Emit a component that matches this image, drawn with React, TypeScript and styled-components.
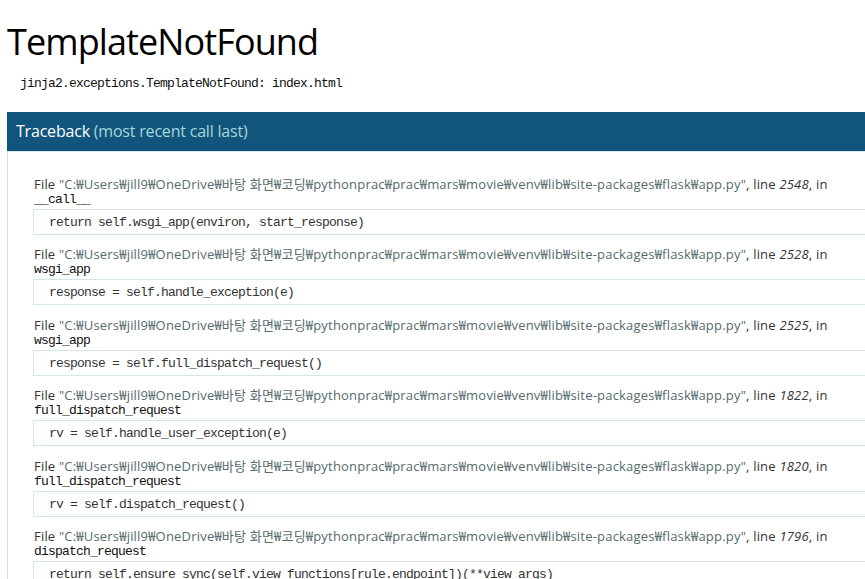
import React from "react";
import styled, { createGlobalStyle } from "styled-components";

const Global = createGlobalStyle`
  html, body { margin: 0; padding: 0; background: #fff; overflow: hidden; }
  body { font-family: "Open Sans", "Noto Sans CJK KR", sans-serif; color: #000; }
`;

const Debugger = styled.div`
  width: 890px;
  padding: 0 0 0 7px;
  text-align: left;
`;

const Title = styled.h1`
  font-family: "Open Sans", "Noto Sans CJK KR", sans-serif;
  font-weight: normal;
  font-size: 36px;
  line-height: 44px;
  margin: 0;
  padding-top: 20px;
  letter-spacing: -0.9px;
`;

const ErrorMsg = styled.p`
  margin: 12px 0 0 13px;
  font-family: "Liberation Mono", "Noto Sans CJK KR", monospace;
  font-size: 13px;
  letter-spacing: -0.8px;
  line-height: 16px;
  color: #111;
  white-space: pre-wrap;
`;

const TracebackHeader = styled.h2`
  margin: 20px 0 0 0;
  padding: 9px;
  height: 21px;
  font-size: 16px;
  line-height: 21px;
  font-weight: normal;
  letter-spacing: -0.2px;
  background-color: #11557c;
  color: #fff;

  em {
    font-style: normal;
    color: #a5d6d9;
  }
`;

const Traceback = styled.div`
  border: 1px solid #ddd;
  border-top-color: #d6e6ea;
  padding: 24px 10px 10px 10px;
`;

const FrameList = styled.ul`
  list-style: none;
  margin: 0;
  padding: 0 0 0 15px;
  display: flex;
  flex-direction: column;
  gap: 11.4px;
`;

const Frame = styled.li`
  margin: 0;
`;

const FrameHeading = styled.h4`
  font-size: 13px;
  font-weight: normal;
  margin: 0 0 1px 0;
  line-height: 16px;
  color: #333;
`;

const FileLine = styled.span`
  display: block;
  white-space: nowrap;
  letter-spacing: 0.2px;
  padding-left: 1px;
`;

const Filename = styled.cite`
  font-style: normal;
  color: #556b6e;
`;

const LineNo = styled.em`
  font-style: italic;
`;

const FunctionName = styled.code`
  display: block;
  font-family: "Liberation Mono", "Noto Sans CJK KR", monospace;
  font-size: 13px;
  letter-spacing: -0.8px;
  line-height: 16px;
  padding-left: 1px;
  color: #111;
`;

const SourceLine = styled.pre`
  margin: 0;
  padding: 5px 0 3px 15px;
  height: 16px;
  line-height: 16px;
  background: #fff;
  color: #333;
  border: 1px solid #d3e7e9;
  font-family: "Liberation Mono", "Noto Sans CJK KR", monospace;
  font-size: 13px;
  letter-spacing: -0.8px;
  white-space: pre;
  overflow: hidden;
`;

const PATH =
  '"C:₩Users₩jill9₩OneDrive₩바탕 화면₩코딩₩pythonprac₩prac₩mars₩movie₩venv₩lib₩site-packages₩flask₩app.py"';

const frames = [
  { line: 2548, fn: "__call__", src: "return self.wsgi_app(environ, start_response)" },
  { line: 2528, fn: "wsgi_app", src: "response = self.handle_exception(e)" },
  { line: 2525, fn: "wsgi_app", src: "response = self.full_dispatch_request()" },
  { line: 1822, fn: "full_dispatch_request", src: "rv = self.handle_user_exception(e)" },
  { line: 1820, fn: "full_dispatch_request", src: "rv = self.dispatch_request()" },
  {
    line: 1796,
    fn: "dispatch_request",
    src: "return self.ensure_sync(self.view_functions[rule.endpoint])(**view_args)",
  },
];

export default function App() {
  return (
    <>
      <Global />
      <Debugger>
        <Title>TemplateNotFound</Title>
        <ErrorMsg>jinja2.exceptions.TemplateNotFound: index.html</ErrorMsg>
        <TracebackHeader>
          Traceback <em>(most recent call last)</em>
        </TracebackHeader>
        <Traceback>
          <FrameList>
            {frames.map((f, i) => (
              <Frame key={i}>
                <FrameHeading>
                  <FileLine>
                    File <Filename>{PATH}</Filename>, line <LineNo>{f.line}</LineNo>, in
                  </FileLine>
                  <FunctionName>{f.fn}</FunctionName>
                </FrameHeading>
                <SourceLine>{f.src}</SourceLine>
              </Frame>
            ))}
          </FrameList>
        </Traceback>
      </Debugger>
    </>
  );
}
